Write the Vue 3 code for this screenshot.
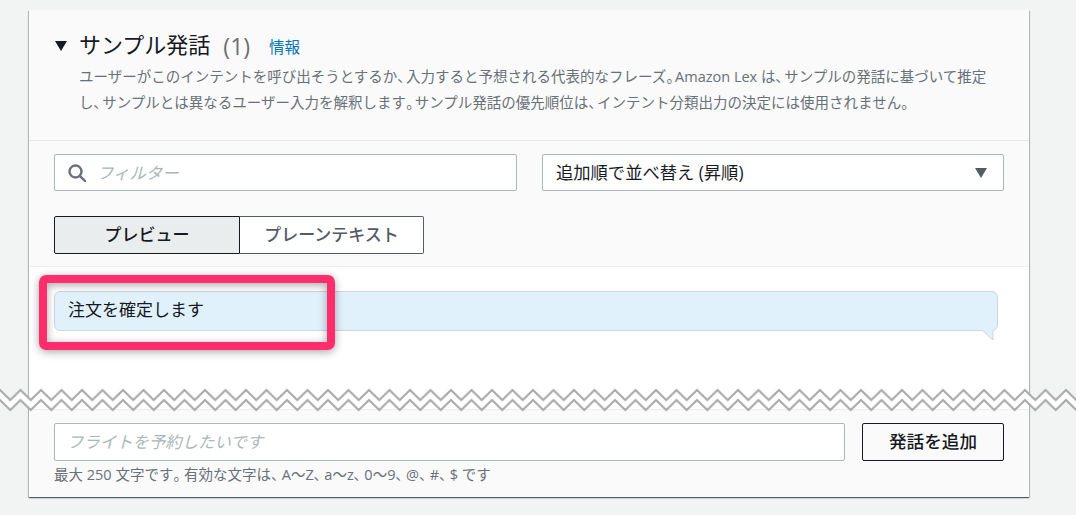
<script setup>
const split = (text) => text.split(/([、。])/).filter(Boolean)
const lines = [
  'ユーザーがこのインテントを呼び出そうとするか、入力すると予想される代表的なフレーズ。Amazon Lex は、サンプルの発話に基づいて推定',
  'し、サンプルとは異なるユーザー入力を解釈します。サンプル発話の優先順位は、インテント分類出力の決定には使用されません。'
].map(split)
const hint = split('最大 250 文字です。有効な文字は、A～Z、a～z、0～9、@、#、$ です')
const isPunct = (s) => s === '、' || s === '。'
</script>

<template>
  <div class="page">
    <section class="card">
      <header class="head">
        <div class="title-row">
          <span class="caret"></span>
          <h2 class="title">サンプル発話</h2>
          <span class="count">(1)</span>
          <a class="info">情報</a>
        </div>
        <div class="desc-block">
          <p v-for="(line, i) in lines" :key="i" class="desc">
            <span v-for="(s, j) in line" :key="j" :class="{ punct: isPunct(s) }">{{ s }}</span>
          </p>
        </div>
      </header>
      <div class="controls">
        <div class="filters">
          <div class="field search">
            <svg class="mag" viewBox="0 0 18 18" width="18" height="18" fill="none" stroke="#687078" stroke-width="2.4">
              <circle cx="7.5" cy="7.5" r="6" />
              <path d="M11.8 11.8 L17 17" stroke-linecap="round" />
            </svg>
            <span class="ph">フィルター</span>
          </div>
          <div class="field select">
            <span>追加順で並べ替え (昇順)</span>
            <span class="sel-caret"></span>
          </div>
        </div>
        <div class="tabs">
          <button class="tab on">プレビュー</button>
          <button class="tab">プレーンテキスト</button>
        </div>
      </div>
      <div class="body">
        <div class="bubble">
          <span>注文を確定します</span>
          <svg class="tail" width="12" height="10" viewBox="0 0 12 10">
            <path d="M0 0 L11 10 L11 0 Z" fill="#e1f1fc" />
            <path d="M0.5 0.5 L11 10 L11 0" fill="none" stroke="#d0d5d9" stroke-width="1" />
          </svg>
        </div>
      </div>
      <footer class="foot">
        <div class="add-row">
          <div class="field add-input"><span class="ph">フライトを予約したいです</span></div>
          <button class="add-btn">発話を追加</button>
        </div>
        <p class="hint">
          <span v-for="(s, j) in hint" :key="j" :class="{ punct: isPunct(s) }">{{ s }}</span>
        </p>
      </footer>
    </section>
    <div class="mark"></div>
    <svg class="zig" width="1076" height="24" viewBox="0 0 1076 24">
      <defs>
        <pattern id="z" width="20.5" height="24" patternUnits="userSpaceOnUse">
          <path d="M0 2 L10.25 12 L20.5 2 L20.5 12 L10.25 22 L0 12 Z" fill="#fff" />
          <path d="M-1 1 L0 2 L10.25 12 L20.5 2 L21.5 1 M-1 11 L0 12 L10.25 22 L20.5 12 L21.5 11" fill="none" stroke="#aaa" stroke-width="2" />
        </pattern>
      </defs>
      <rect width="1076" height="24" fill="url(#z)" />
    </svg>
  </div>
</template>

<style>
html, body { margin: 0; background: #f2f3f3; }
</style>

<style scoped>
.page {
  position: relative;
  width: 1076px;
  height: 515px;
  overflow: hidden;
  padding: 10px 0 0 29px;
  box-sizing: border-box;
  font-family: "Open Sans", "Noto Sans CJK JP", sans-serif;
  color: #16191f;
}
.punct {
  font-feature-settings: "palt";
  letter-spacing: 1.5px;
}
.card {
  width: 1000px;
  height: 487px;
  background: #fafafa;
  box-shadow: 0 1px 1px 0 rgba(0, 28, 36, 0.5), 1px 1px 1px 0 rgba(0, 28, 36, 0.2), -1px 1px 1px 0 rgba(0, 28, 36, 0.2);
  display: flex;
  flex-direction: column;
}
.head {
  height: 131px;
  box-sizing: border-box;
  padding: 20px 25px 0 25px;
  border-bottom: 1px solid #e6e9ea;
}
.title-row {
  display: flex;
  align-items: center;
  height: 30px;
}
.caret {
  width: 0;
  height: 0;
  border-left: 6.5px solid transparent;
  border-right: 6.5px solid transparent;
  border-top: 10px solid #16191f;
  margin: 2px 12px 0 1px;
}
.title {
  margin: -2px 0 0;
  font-size: 22px;
  font-weight: 400;
  line-height: 30px;
}
.count {
  font-size: 23px;
  color: #687078;
  margin: 1px 0 0 13px;
}
.info {
  font-size: 15.5px;
  color: #0073bb;
  margin: 3px 0 0 19px;
}
.desc-block { margin: 4px 0 0 25px; }
.desc {
  margin: 0;
  font-size: 14.5px;
  line-height: 26px;
  color: #687078;
  white-space: nowrap;
}
.controls {
  padding: 13px 25px 12px 25px;
  border-bottom: 1px solid #eaeded;
}
.filters {
  display: flex;
  gap: 25px;
}
.field {
  height: 37px;
  box-sizing: border-box;
  background: #fff;
  border: 1px solid #aab7b8;
  border-radius: 2px;
  display: flex;
  align-items: center;
}
.search {
  width: 463px;
  padding: 0 0 2px 13px;
}
.mag { margin: 2px 11px 0 0; }
.ph {
  color: #aab7b8;
  font-style: italic;
  font-size: 16.4px;
}
.select {
  width: 462px;
  font-size: 17.3px;
  padding: 0 13px 3px;
  justify-content: space-between;
}
.sel-caret {
  width: 0;
  height: 0;
  border-left: 6.5px solid transparent;
  border-right: 6.5px solid transparent;
  border-top: 10px solid #545b64;
  margin: 3px 3px 0 0;
}
.tabs {
  display: flex;
  margin-top: 25px;
}
.tab {
  height: 38px;
  width: 184px;
  box-sizing: border-box;
  margin: 0;
  font: inherit;
  font-size: 17px;
  font-weight: 500;
  color: #545b64;
  background: #fff;
  border: 1px solid #545b64;
  border-left: none;
  border-radius: 0 2px 2px 0;
  padding: 0 0 3px;
}
.tab.on {
  width: 186px;
  color: #16191f;
  background: #eaeded;
  border: 1px solid #16191f;
  border-radius: 2px 0 0 2px;
}
.body {
  background: #fff;
  height: 143px;
  box-sizing: border-box;
  padding: 24px 31px 0 25px;
  border-bottom: 1px solid #eaeded;
}
.bubble {
  position: relative;
  height: 40px;
  box-sizing: border-box;
  background: #e1f1fc;
  border: 1px solid #d0d5d9;
  border-radius: 6px;
  padding: 0 0 6px 13px;
  display: flex;
  align-items: center;
  font-size: 17px;
}
.tail {
  position: absolute;
  right: 3px;
  top: 38px;
}
.foot {
  padding: 13px 25px 0 25px;
}
.add-row {
  display: flex;
  justify-content: space-between;
}
.add-input {
  width: 791px;
  height: 38px;
  padding: 0 0 3px 12px;
}
.add-btn {
  width: 142px;
  height: 38px;
  box-sizing: border-box;
  margin: 0;
  padding: 0 0 4px;
  background: #fafafa;
  border: 1px solid #16191f;
  border-radius: 2px;
  color: #16191f;
  font: inherit;
  font-size: 17.6px;
  font-weight: 500;
}
.hint {
  margin: 5px 0 0;
  font-size: 14.5px;
  line-height: 18px;
  color: #687078;
}
.hint .punct { letter-spacing: 3.4px; }
.mark {
  position: absolute;
  left: 39px;
  top: 275px;
  width: 296px;
  height: 75px;
  box-sizing: border-box;
  border: 8px solid #ff2d6b;
  border-radius: 7px;
  box-shadow: 0 2px 8px rgba(0, 0, 0, 0.35), inset 0 2px 8px rgba(0, 0, 0, 0.35);
}
.zig {
  position: absolute;
  left: 0;
  top: 388px;
}
</style>
